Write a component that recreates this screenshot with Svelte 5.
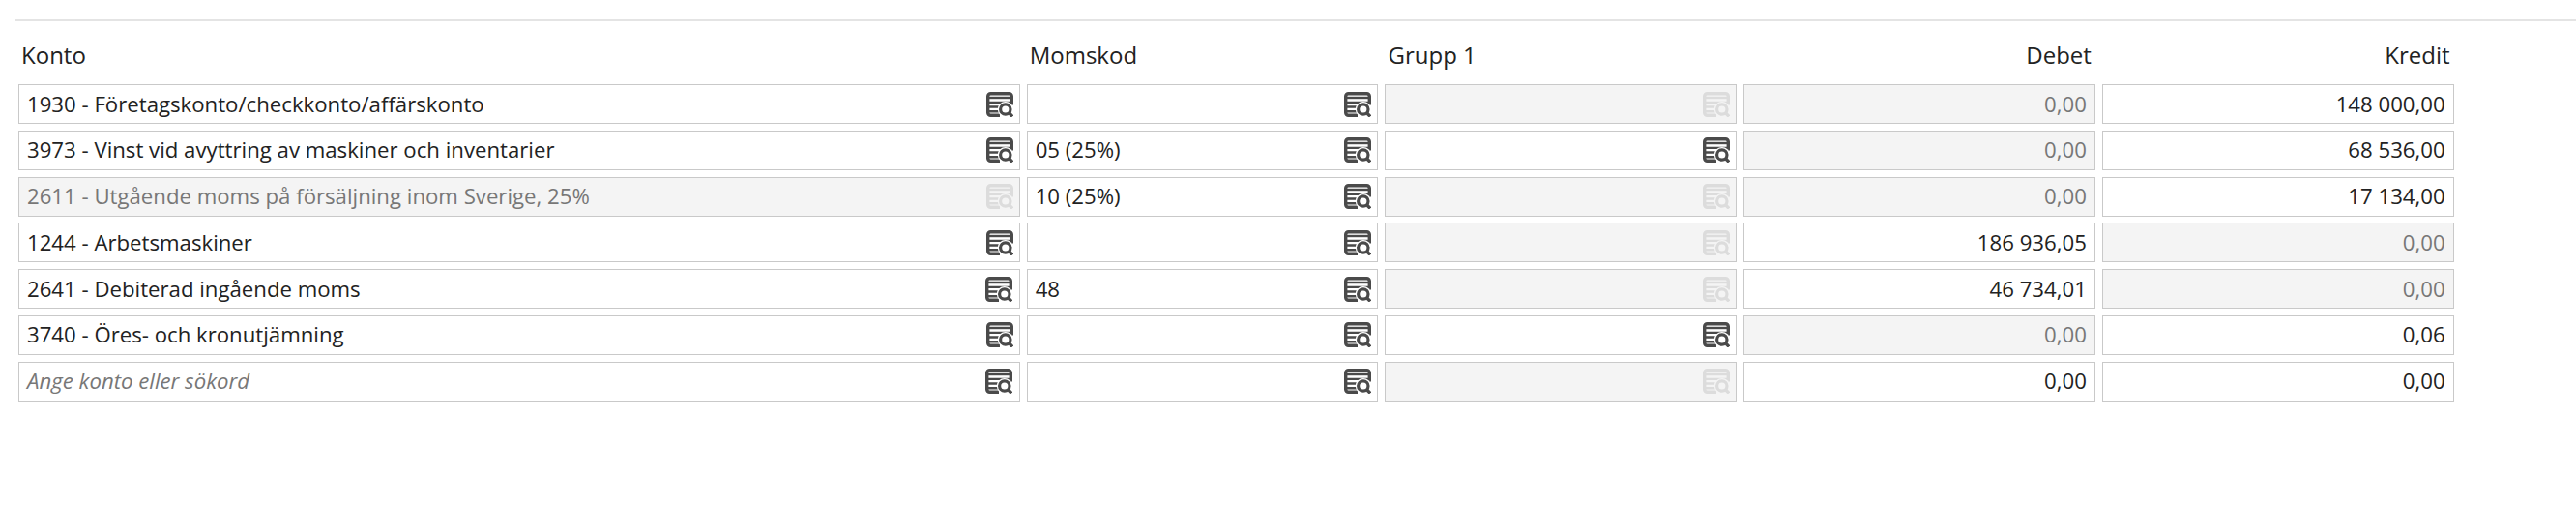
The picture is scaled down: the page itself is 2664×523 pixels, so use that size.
<script>
  const rows = [
    { konto: '1930 - Företagskonto/checkkonto/affärskonto', moms: '', group: false, debet: '0,00', debetOff: true, kredit: '148 000,00', kreditOff: false },
    { konto: '3973 - Vinst vid avyttring av maskiner och inventarier', moms: '05 (25%)', group: true, debet: '0,00', debetOff: true, kredit: '68 536,00', kreditOff: false },
    { konto: '2611 - Utgående moms på försäljning inom Sverige, 25%', kontoOff: true, moms: '10 (25%)', group: false, debet: '0,00', debetOff: true, kredit: '17 134,00', kreditOff: false },
    { konto: '1244 - Arbetsmaskiner', moms: '', group: false, debet: '186 936,05', debetOff: false, kredit: '0,00', kreditOff: true },
    { konto: '2641 - Debiterad ingående moms', moms: '48', group: false, debet: '46 734,01', debetOff: false, kredit: '0,00', kreditOff: true },
    { konto: '3740 - Öres- och kronutjämning', moms: '', group: true, debet: '0,00', debetOff: true, kredit: '0,06', kreditOff: false },
    { konto: 'Ange konto eller sökord', placeholder: true, moms: '', group: false, debet: '0,00', debetOff: false, kredit: '0,00', kreditOff: false }
  ];
</script>

{#snippet icon()}
  <svg class="icon" viewBox="0 0 28 26" aria-hidden="true">
    <path d="M14 24.300H4.500a2.800 2.800 0 0 1-2.800-2.800V4.500A2.800 2.800 0 0 1 4.500 1.700h19a2.800 2.800 0 0 1 2.800 2.800v9" fill="none" stroke="currentColor" stroke-width="3.400"/>
    <path d="M2 4.800h24v2.400H2z" fill="currentColor"/>
    <path d="M3 9.700h22v2.300H3zM3 14.300h10v2.400H3zM3 19h10v2.400H3z" fill="currentColor"/>
    <circle cx="19.800" cy="18" r="8" fill="var(--cell-bg)"/>
    <circle cx="19.800" cy="18" r="5.200" fill="none" stroke="currentColor" stroke-width="3.200"/>
    <path d="M23.500 21.800l3.600 3.600" stroke="currentColor" stroke-width="3.400" fill="none"/>
  </svg>
{/snippet}

{#snippet lookup(text, off, placeholder)}
  <div class="cell" class:off>
    <span class="value" class:placeholder>{text}</span>
    {@render icon()}
  </div>
{/snippet}

<div class="page">
  <div class="rule"></div>
  <div class="grid heads">
    <div class="head">Konto</div>
    <div class="head">Momskod</div>
    <div class="head">Grupp 1</div>
    <div class="head num">Debet</div>
    <div class="head num">Kredit</div>
  </div>
  <div class="grid body">
    {#each rows as r}
      {@render lookup(r.konto, r.kontoOff, r.placeholder)}
      {@render lookup(r.moms, false, false)}
      {@render lookup('', !r.group, false)}
      <div class="cell num" class:off={r.debetOff}><span class="value">{r.debet}</span></div>
      <div class="cell num" class:off={r.kreditOff}><span class="value">{r.kredit}</span></div>
    {/each}
  </div>
</div>

<style>
  :global(body) {
    margin: 0;
    background: #fff;
  }
  .page {
    height: 523px;
    padding: 20px 0 0 16px;
    box-sizing: border-box;
    font-family: "Open Sans", sans-serif;
    font-size: 22.2px;
    color: #222;
    overflow: hidden;
  }
  .rule {
    height: 2px;
    background: #e4e4e4;
  }
  .grid {
    display: grid;
    grid-template-columns: 1035.5px 363.6px 363.6px 363.6px 363.6px;
    column-gap: 7.2px;
    margin-left: 3px;
  }
  .heads {
    margin-top: 18px;
    margin-bottom: 14px;
  }
  .body {
    row-gap: 6.8px;
  }
  .head {
    line-height: 33px;
    padding: 0 4px 0 3px;
    font-size: 24px;
    white-space: nowrap;
  }
  .head.num {
    text-align: right;
  }
  .cell {
    --cell-bg: #fff;
    display: flex;
    align-items: center;
    box-sizing: border-box;
    height: 41px;
    border: 1px solid #c9c9c9;
    background: var(--cell-bg);
    padding: 0 6px 0 8px;
    color: #222;
  }
  .cell.num {
    justify-content: flex-end;
    padding-right: 8px;
  }
  .cell.off {
    --cell-bg: #f4f4f4;
    color: #777;
  }
  .value {
    flex: 0 1 auto;
    margin-right: auto;
    white-space: nowrap;
    line-height: 30px;
  }
  .num .value {
    margin-right: 0;
  }
  .placeholder {
    font-style: italic;
    color: #777;
  }
  .icon {
    flex: none;
    width: 28px;
    height: 26px;
    margin-left: auto;
    color: #4a4a4a;
  }
  .off .icon {
    color: #dcdcdc;
  }
</style>
